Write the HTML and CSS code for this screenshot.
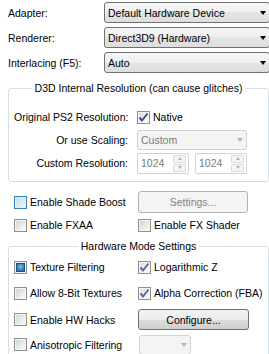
FILE: index.html
```html
<!DOCTYPE html>
<html lang="en">

<head>
    <meta charset="UTF-8">
    <title>GSdx Settings</title>
    <link rel="stylesheet" href="styles.css">
</head>

<body>

    <div class="panel">
        <div class="top">
            <span class="lbl">Adapter:</span>
            <div class="combo wide"><span>Default Hardware Device</span><i class="arrow"></i></div>
            <span class="lbl">Renderer:</span>
            <div class="combo wide"><span>Direct3D9 (Hardware)</span><i class="arrow"></i></div>
            <span class="lbl">Interlacing (F5):</span>
            <div class="combo wide"><span>Auto</span><i class="arrow"></i></div>
        </div>

        <fieldset class="group res">
            <legend>D3D Internal Resolution (can cause glitches)</legend>
            <div class="form">
                <span class="flbl">Original PS2 Resolution:</span>
                <label class="check"><span class="box checked"><svg width="11" height="11" viewBox="0 0 11 11"><path d="M1.5 5.5 L4 8.5 L9.5 1.5" fill="none" stroke="#3f5288" stroke-width="2"/></svg></span>Native</label>

                <span class="flbl">Or use Scaling:</span>
                <div class="combo disabled scaling"><span>Custom</span><i class="arrow"></i></div>

                <span class="flbl">Custom Resolution:</span>
                <div class="spins">
                    <div class="spin"><span>1024</span><div class="spinbtns"><b><i class="up"></i></b><b><i class="down"></i></b></div></div>
                    <div class="spin"><span>1024</span><div class="spinbtns"><b><i class="up"></i></b><b><i class="down"></i></b></div></div>
                </div>
            </div>
        </fieldset>

        <div class="opts">
            <label class="check"><span class="box hot"></span>Enable Shade Boost</label>
            <div class="btn disabled">Settings...</div>
            <label class="check"><span class="box"></span>Enable FXAA</label>
            <label class="check"><span class="box"></span>Enable FX Shader</label>
        </div>

        <fieldset class="group hw">
            <legend>Hardware Mode Settings</legend>
            <div class="grid">
                <label class="check"><span class="box mixed"><span class="fill"></span></span>Texture Filtering</label>
                <label class="check"><span class="box checked"><svg width="11" height="11" viewBox="0 0 11 11"><path d="M1.5 5.5 L4 8.5 L9.5 1.5" fill="none" stroke="#5a6c9c" stroke-width="2"/></svg></span>Logarithmic Z</label>

                <label class="check"><span class="box"></span>Allow 8-Bit Textures</label>
                <label class="check"><span class="box checked"><svg width="11" height="11" viewBox="0 0 11 11"><path d="M1.5 5.5 L4 8.5 L9.5 1.5" fill="none" stroke="#5a6c9c" stroke-width="2"/></svg></span>Alpha Correction (FBA)</label>

                <label class="check"><span class="box"></span>Enable HW Hacks</label>
                <div class="btn">Configure...</div>

                <label class="check"><span class="box"></span>Anisotropic Filtering</label>
                <div class="combo disabled aniso"><span></span><i class="arrow"></i></div>
            </div>
        </fieldset>
    </div>

</body>

</html>
```

FILE: styles.css
```css
body {
    margin: 0;
    font-family: "Liberation Sans", Tahoma, sans-serif;
    font-size: 10.5px;
    color: #000;
    background-color: #fff;
}

.panel {
    width: 269px;
    height: 354px;
    overflow: hidden;
}

/* top combos */
.top {
    display: grid;
    grid-template-columns: 96px 166px;
    grid-auto-rows: 25px;
    align-items: center;
    padding-left: 8px;
}

.combo {
    box-sizing: border-box;
    display: flex;
    align-items: center;
    justify-content: space-between;
    border: 1px solid #707070;
    border-radius: 3px;
    padding: 0 3px 0 3px;
    background: linear-gradient(#f6f6f6, #efefef 50%, #e5e5e5 50%, #dedede);
}

.combo.wide {
    height: 21px;
}

.arrow {
    width: 0;
    height: 0;
    border-left: 3.5px solid transparent;
    border-right: 3.5px solid transparent;
    border-top: 4px solid #000;
}

.combo.disabled {
    border-color: #d2d2d2;
    background: #f4f4f4;
    color: #7a7a7a;
    height: 20px;
}

.combo.disabled .arrow {
    border-top-color: #b4b4b4;
}

.combo.scaling {
    width: 110px;
}

.combo.aniso {
    width: 52px;
    margin-left: 1px;
}

/* group boxes */
.group {
    box-sizing: border-box;
    width: 261px;
    margin: 0 0 0 8px;
    border: 1px solid #d5dfe5;
    border-radius: 3px;
    min-width: 0;
}

.group legend {
    margin: 0 auto;
    padding: 0 3px;
    line-height: 13px;
}

.res {
    margin-top: 7px;
    padding: 11px 5px 6px 5px;
}

.form {
    display: grid;
    grid-template-columns: 114px auto;
    grid-template-rows: 22px 23px 24px;
    column-gap: 9px;
    align-items: center;
}

.flbl {
    text-align: right;
    white-space: nowrap;
}

.check {
    display: flex;
    align-items: center;
    gap: 3px;
    white-space: nowrap;
}

.box {
    box-sizing: border-box;
    width: 13px;
    height: 13px;
    flex: none;
    display: flex;
    align-items: center;
    justify-content: center;
    border: 1px solid #8e8f8f;
    background: linear-gradient(135deg, #cfcfcf, #f6f6f6 80%);
    box-shadow: inset 0 0 0 1px #f4f4f4;
}

.box.checked {
    background: linear-gradient(135deg, #dcdcdc, #fafafa 80%);
}

.box.hot {
    border-color: #3c7fb1;
    background: linear-gradient(135deg, #b9dcf3, #e8f5fd 80%);
    box-shadow: inset 0 0 0 1px #def0fb;
}

.box.mixed {
    background: #f4f4f4;
    box-shadow: none;
}

.fill {
    width: 7px;
    height: 7px;
    border: 1px solid #1d4f7f;
    background: radial-gradient(circle at 50% 40%, #7cc2e8, #2e7cb6 70%);
}

/* spin boxes */
.spins {
    display: flex;
    gap: 6px;
}

.spin {
    box-sizing: border-box;
    display: flex;
    align-items: center;
    justify-content: space-between;
    width: 52px;
    height: 21px;
    padding: 0 2px 0 3px;
    border: 1px solid #d2d2d2;
    border-radius: 2px;
    color: #7a7a7a;
    background: #fff;
}

.spinbtns {
    display: flex;
    flex-direction: column;
    gap: 1px;
}

.spinbtns b {
    box-sizing: border-box;
    width: 13px;
    height: 8px;
    display: flex;
    align-items: center;
    justify-content: center;
    border: 1px solid #dadada;
    border-radius: 1px;
    background: #f4f4f4;
}

.up, .down {
    width: 0;
    height: 0;
    border-left: 2.5px solid transparent;
    border-right: 2.5px solid transparent;
}

.up {
    border-bottom: 3px solid #b0b0b0;
}

.down {
    border-top: 3px solid #b0b0b0;
}

/* buttons */
.btn {
    box-sizing: border-box;
    width: 111px;
    height: 21px;
    display: flex;
    align-items: center;
    justify-content: center;
    border: 1px solid #707070;
    border-radius: 3px;
    background: linear-gradient(#f2f2f2, #ebebeb 50%, #dddddd 50%, #cfcfcf);
}

.btn.disabled {
    width: 110px;
    height: 22px;
    border-color: #adb2b5;
    background: #f4f4f4;
    color: #838383;
}

/* middle options */
.opts {
    display: grid;
    grid-template-columns: 124px auto;
    grid-template-rows: 22px 24px;
    align-items: center;
    padding-left: 14px;
    margin-top: 9px;
}

.hw {
    margin-top: 3px;
    padding: 1px 5px 6px 5px;
}

.grid {
    display: grid;
    grid-template-columns: 124px auto;
    grid-template-rows: 26px 26px 27px 23px;
    align-items: center;
}
```
